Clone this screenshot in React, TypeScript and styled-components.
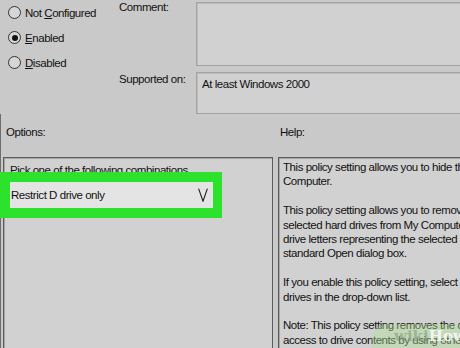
import React from "react";
import styled, { createGlobalStyle } from "styled-components";

const GlobalStyle = createGlobalStyle`
  html, body {
    margin: 0;
    padding: 0;
    background: #c9c9c9;
  }
  body {
    font-family: "Liberation Sans", Arial, sans-serif;
    font-size: 11.5px;
    letter-spacing: -0.45px;
    color: #111;
  }
`;

const Page = styled.div`
  position: relative;
  width: 460px;
  height: 348px;
  overflow: hidden;
  background: #c9c9c9;
`;

const Top = styled.div`
  display: grid;
  grid-template-columns: 119px 77px 270px;
  grid-template-rows: 70px 42px;
  row-gap: 2px;
  height: 114px;
`;

const Radios = styled.div`
  grid-row: 1 / span 2;
  display: flex;
  flex-direction: column;
  padding-left: 8px;
`;

const RadioRow = styled.label`
  display: flex;
  align-items: center;
  gap: 4px;
  height: 25px;
  line-height: 14px;
`;

const RadioDot = styled.span<{ $checked?: boolean }>`
  position: relative;
  width: 11px;
  height: 11px;
  border: 1px solid #333;
  border-radius: 50%;
  background: #d6d6d6;
  &::after {
    content: "";
    display: ${p => (p.$checked ? "block" : "none")};
    position: absolute;
    left: 2.5px;
    top: 2.5px;
    width: 6px;
    height: 6px;
    border-radius: 50%;
    background: #111;
  }
`;

const FieldLabel = styled.div`
  line-height: 14px;
  white-space: nowrap;
`;

const FieldBox = styled.div<{ $top?: number }>`
  margin-top: ${p => p.$top ?? 0}px;
  border: 1px solid #a3a3a3;
  box-shadow: inset 1px 1px 0 #bdbdbd;
  background: #d1d1d1;
  padding: 4px 5px;
  line-height: 14px;
  white-space: nowrap;
`;

const Lower = styled.div`
  display: grid;
  grid-template-columns: 270px 200px;
  grid-template-rows: 43px 200px;
  column-gap: 5px;
  border-left: 1px solid #6d6d6d;
  padding-left: 2px;
`;

const SectionLabel = styled.div<{ $indent: number }>`
  padding-top: 11px;
  padding-left: ${p => p.$indent}px;
  line-height: 14px;
`;

const ListPanel = styled.div`
  border: 1px solid #5c5c5c;
  box-shadow: inset 1px 1px 0 #a5a5a5;
  background: #d1d1d1;
  padding: 5px 6px;
`;

const PickText = styled.div`
  line-height: 14px;
  white-space: nowrap;
`;

const Highlight = styled.div`
  position: relative;
  z-index: 1;
  margin: -5px 0 0 -10px;
  width: 203px;
  border: 10px solid #2ce22c;
  border-right-width: 9px;
`;

const Dropdown = styled.div`
  display: flex;
  align-items: center;
  justify-content: space-between;
  height: 26px;
  box-sizing: border-box;
  padding: 0 5px 0 1px;
  background: #e4e4e4;
`;

const HelpPanel = styled.div`
  border: 1px solid #5c5c5c;
  box-shadow: inset 1px 1px 0 #a5a5a5;
  background: #d1d1d1;
  padding: 2px 4px;
  overflow: hidden;
`;

const HelpLine = styled.div`
  height: 14.4px;
  line-height: 14.4px;
  white-space: nowrap;
`;

const Watermark = styled.div`
  position: absolute;
  right: 0;
  bottom: 0;
  width: 88px;
  height: 24px;
  padding-left: 22px;
  box-sizing: border-box;
  border-top-left-radius: 14px;
  background: rgba(176, 226, 150, 0.4);
  font-family: "DejaVu Serif", serif;
  font-weight: bold;
  font-size: 15px;
  letter-spacing: 0;
  line-height: 24px;
  white-space: nowrap;
  span:first-child {
    color: rgba(120, 140, 110, 0.5);
  }
  span:last-child {
    color: rgba(255, 255, 255, 0.8);
  }
`;

const Chevron = () => (
  <svg width="10" height="14" viewBox="0 0 10 14">
    <polyline points="0.6,0.6 5,13.2 9.4,0.6" fill="none" stroke="#1e1e1e" strokeWidth="1.1" />
  </svg>
);

const helpLines = [
  "This policy setting allows you to hide these specified drives in My",
  "Computer.",
  "",
  "This policy setting allows you to remove the icons representing",
  "selected hard drives from My Computer and File Explorer. Also, the",
  "drive letters representing the selected drives no longer appear in the",
  "standard Open dialog box.",
  "",
  "If you enable this policy setting, select a drive or combination of",
  "drives in the drop-down list.",
  "",
  "Note: This policy setting removes the drive icons. Users can still gain",
  "access to drive contents by using other methods, such as by typing",
];

export default function App() {
  return (
    <Page>
      <GlobalStyle />
      <Top>
        <Radios>
          <RadioRow>
            <RadioDot />
            <span>
              Not <u>C</u>onfigured
            </span>
          </RadioRow>
          <RadioRow>
            <RadioDot $checked />
            <span>
              <u>E</u>nabled
            </span>
          </RadioRow>
          <RadioRow>
            <RadioDot />
            <span>
              <u>D</u>isabled
            </span>
          </RadioRow>
        </Radios>
        <FieldLabel>Comment:</FieldLabel>
        <FieldBox $top={2} style={{ height: 54 }} />
        <FieldLabel>Supported on:</FieldLabel>
        <FieldBox>At least Windows 2000</FieldBox>
      </Top>
      <Lower>
        <SectionLabel $indent={3}>Options:</SectionLabel>
        <SectionLabel $indent={2}>Help:</SectionLabel>
        <ListPanel>
          <PickText>Pick one of the following combinations</PickText>
          <Highlight>
            <Dropdown>
              <span>Restrict D drive only</span>
              <Chevron />
            </Dropdown>
          </Highlight>
        </ListPanel>
        <HelpPanel>
          {helpLines.map((line, i) => (
            <HelpLine key={i}>{line}</HelpLine>
          ))}
        </HelpPanel>
      </Lower>
      <Watermark>
        <span>wiki</span>
        <span>How</span>
      </Watermark>
    </Page>
  );
}
